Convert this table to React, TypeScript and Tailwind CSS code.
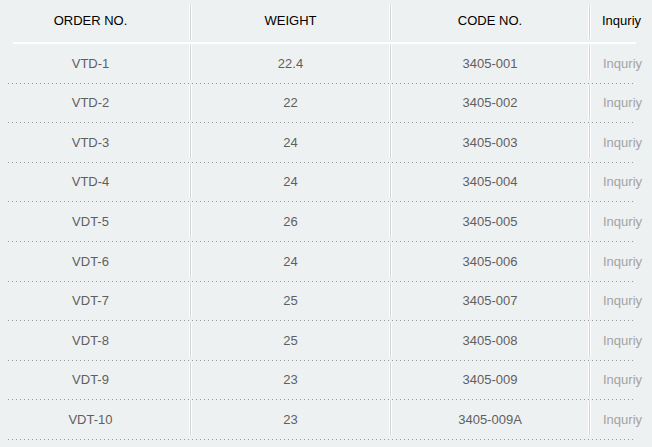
import React from "react";

interface Row {
  order: string;
  weight: string;
  code: string;
}

const rows: Row[] = [
  { order: "VTD-1", weight: "22.4", code: "3405-001" },
  { order: "VTD-2", weight: "22", code: "3405-002" },
  { order: "VTD-3", weight: "24", code: "3405-003" },
  { order: "VTD-4", weight: "24", code: "3405-004" },
  { order: "VDT-5", weight: "26", code: "3405-005" },
  { order: "VDT-6", weight: "24", code: "3405-006" },
  { order: "VDT-7", weight: "25", code: "3405-007" },
  { order: "VDT-8", weight: "25", code: "3405-008" },
  { order: "VDT-9", weight: "23", code: "3405-009" },
  { order: "VDT-10", weight: "23", code: "3405-009A" },
];

const cols = "grid grid-cols-[176px_3px_197px_3px_196px_3px_45px]";

const Sep = ({ className = "" }: { className?: string }) => (
  <div className={`w-[3px] bg-[#cfd2d4] border-x border-white ${className}`} />
);

const App: React.FC = () => {
  return (
    <div
      className="w-[652px] h-[447px] bg-[#eef1f2] px-[8px] overflow-hidden text-[13px]"
      style={{ fontFamily: '"Liberation Sans", Arial, sans-serif' }}
    >
      {/* header */}
      <div className={`${cols} ml-[5px] h-[42px] items-center text-black`}>
        <div className="text-center pr-[21px]">ORDER NO.</div>
        <Sep className="h-[34px] mt-[1px]" />
        <div className="text-center">WEIGHT</div>
        <Sep className="h-[34px] mt-[1px]" />
        <div className="text-center">CODE NO.</div>
        <Sep className="h-[34px] mt-[1px]" />
        <div className="pl-[11px] whitespace-nowrap">Inquriy</div>
      </div>
      <div className="ml-[5px] w-[623px] h-[2px] bg-white" />

      {rows.map((r) => (
        <div key={r.order} className="h-[39.6px] flex flex-col">
          <div className={`${cols} ml-[5px] flex-1 items-center text-[#5f5f5f]`}>
            <div className="text-center pr-[21px]">{r.order}</div>
            <Sep className="h-[34px] self-start mt-[1px]" />
            <div className="text-center">{r.weight}</div>
            <Sep className="h-[34px] self-start mt-[1px]" />
            <div className="text-center">{r.code}</div>
            <Sep className="h-[34px] self-start mt-[1px]" />
            <div className="pl-[12px] whitespace-nowrap text-[#a3a3a3]">Inquriy</div>
          </div>
          <div className="w-[627px] h-px bg-[linear-gradient(to_right,#9a9a9a_1px,transparent_1px)] bg-[length:4px_1px]" />
        </div>
      ))}
    </div>
  );
};

export default App;
